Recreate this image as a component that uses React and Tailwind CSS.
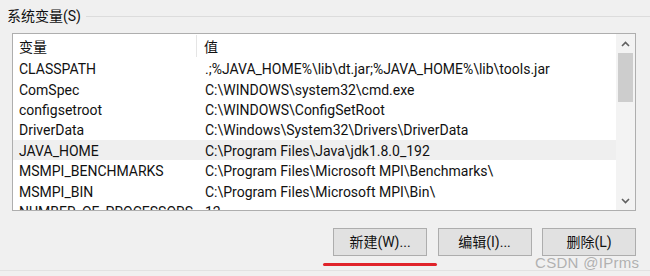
const rows = [
  { name: "CLASSPATH", value: ".;%JAVA_HOME%\\lib\\dt.jar;%JAVA_HOME%\\lib\\tools.jar" },
  { name: "ComSpec", value: "C:\\WINDOWS\\system32\\cmd.exe" },
  { name: "configsetroot", value: "C:\\WINDOWS\\ConfigSetRoot" },
  { name: "DriverData", value: "C:\\Windows\\System32\\Drivers\\DriverData" },
  { name: "JAVA_HOME", value: "C:\\Program Files\\Java\\jdk1.8.0_192", selected: true },
  { name: "MSMPI_BENCHMARKS", value: "C:\\Program Files\\Microsoft MPI\\Benchmarks\\" },
  { name: "MSMPI_BIN", value: "C:\\Program Files\\Microsoft MPI\\Bin\\" },
  { name: "NUMBER_OF_PROCESSORS", value: "12" },
];

const buttons = ["新建(W)...", "编辑(I)...", "删除(L)"];

export default function App() {
  return (
    <div
      className="relative w-[650px] h-[276px] overflow-hidden bg-[#f0f0f0] text-[14px] text-[#111]"
      style={{ fontFamily: 'Roboto, "Noto Sans CJK SC", sans-serif' }}
    >
      <div className="h-[271px] border-b border-[#e2e2e2] flex flex-col">
        {/* ── group title ── */}
        <div className="h-[30px] flex items-center pl-[7px] pt-[2px] gap-[5px]">
          <span className="leading-none">系统变量(S)</span>
          <div className="flex-1 h-px bg-[#dcdcdc]" />
        </div>

        {/* ── list view ── */}
        <div className="mt-[3px] ml-[12px] w-[624px] h-[178px] border border-[#aeaeae] bg-white flex overflow-hidden">
          <div className="flex-1 flex flex-col overflow-hidden">
            <div className="h-[24px] shrink-0 flex items-center">
              <div className="w-[184px] h-[22px] pl-[6px] pt-[2px] flex items-center border-r border-[#e5e5e5]">变量</div>
              <div className="pl-[7px] pt-[2px]">值</div>
            </div>
            {rows.map((r) => (
              <div
                key={r.name}
                className={`h-[20.4px] shrink-0 pt-[3px] flex items-center whitespace-nowrap ${r.selected ? "bg-[#efefef]" : ""}`}
              >
                <div className="w-[184px] pl-[6px] overflow-hidden">{r.name}</div>
                <div className="pl-[8px]">{r.value}</div>
              </div>
            ))}
          </div>

          {/* ── scrollbar ── */}
          <div className="w-[19px] shrink-0 bg-[#f3f3f3] flex flex-col items-center">
            <div className="h-[19px] w-full flex items-center justify-center">
              <svg width="9" height="6" viewBox="0 0 9 6" fill="none" stroke="#606060" strokeWidth="1.6">
                <path d="M1 5l3.5-3.5L8 5" />
              </svg>
            </div>
            <div className="w-[15px] h-[49px] bg-[#cdcdcd]" />
            <div className="flex-1" />
            <div className="h-[19px] w-full flex items-center justify-center">
              <svg width="9" height="6" viewBox="0 0 9 6" fill="none" stroke="#606060" strokeWidth="1.6">
                <path d="M1 1l3.5 3.5L8 1" />
              </svg>
            </div>
          </div>
        </div>

        {/* ── buttons ── */}
        <div className="mt-[17px] flex justify-end pr-[14px] gap-[10.5px]">
          {buttons.map((b) => (
            <button
              key={b}
              className="w-[94px] h-[28px] bg-[#e1e1e1] border border-[#adadad] flex items-center justify-center"
            >
              {b}
            </button>
          ))}
        </div>
      </div>

      {/* annotation + watermark */}
      <div className="absolute left-[323px] top-[263px] w-[114px] h-[3px] rounded-full bg-[#e0232a]" />
      <div
        className="absolute left-[535px] top-[252px] text-[15px] text-[#a9a9a9]/90 tracking-[0.3px]"
        style={{ fontFamily: '"Liberation Sans", sans-serif' }}
      >
        CSDN @IPrms
      </div>
    </div>
  );
}
